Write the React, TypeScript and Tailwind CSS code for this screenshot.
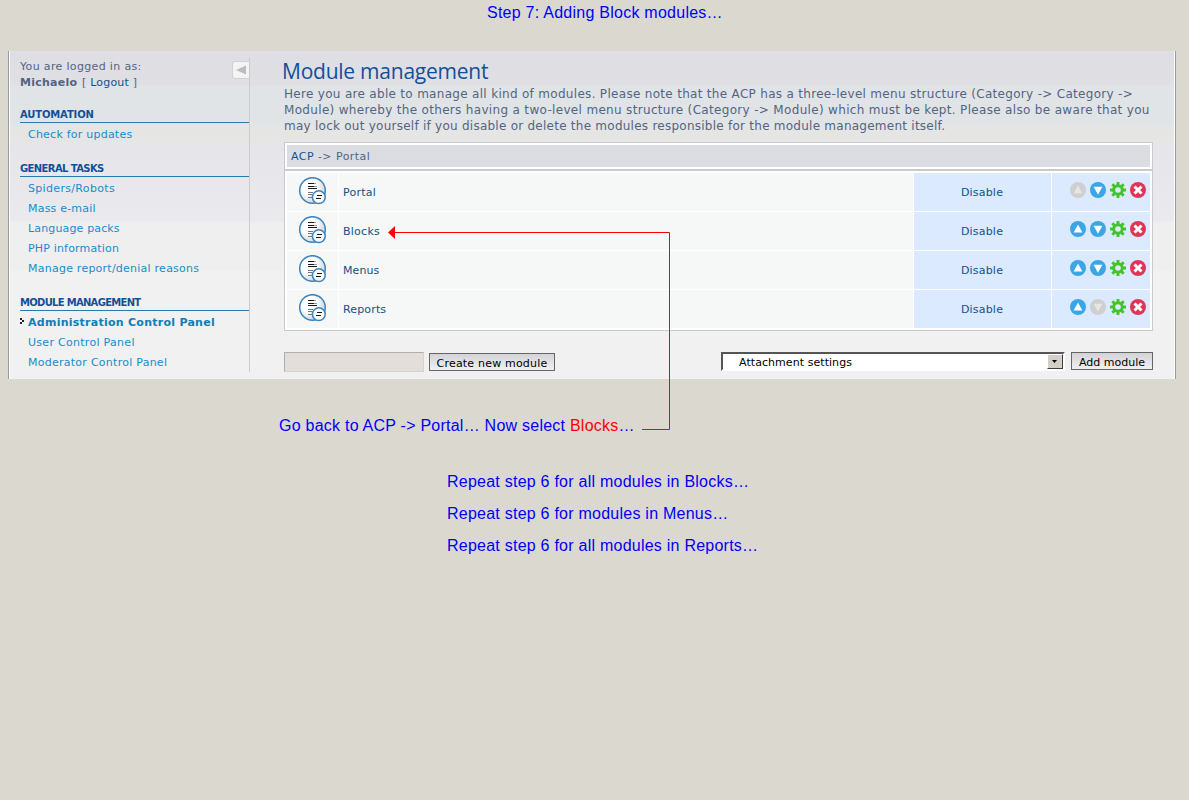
import type { ReactNode } from "react";

function ModuleIcon() {
  return (
    <svg width="28" height="28" viewBox="0 0 28 28" className="block">
      <defs>
        <radialGradient id="mod" cx="35%" cy="35%" r="75%">
          <stop offset="0.4" stopColor="#fff" />
          <stop offset="1" stopColor="#c9ccd2" />
        </radialGradient>
      </defs>
      <circle cx="13.5" cy="13.5" r="12.8" fill="url(#mod)" stroke="#3c83bf" strokeWidth="1.5" />
      <path d="M9 6.5h6M9 9.5h6M9 11.5h9" stroke="#1a1a1a" strokeWidth="1.1" />
      <path d="M15 6.5h2M15 9.5h3" stroke="#999" strokeWidth="1" />
      <path d="M9 15.5h5M9 17.5h4M9 20.5h4" stroke="#777" strokeWidth="1" />
      <circle cx="19.8" cy="20.2" r="6.4" fill="#f8fafc" stroke="#3c83bf" strokeWidth="1.5" />
      <path d="M18 18.5h5M17 21.5h5" stroke="#1a1a1a" strokeWidth="1.2" />
    </svg>
  );
}

function Move({ up, off }: { up?: boolean; off?: boolean }) {
  return (
    <svg width="16" height="16" viewBox="0 0 16 16" className="block">
      <circle cx="8" cy="8" r="8" fill={off ? "#cfcfcf" : "#3aa6e6"} />
      <path d={up ? "M8 3.5L12.4 11.4H3.6z" : "M8 12.7L12.4 4.8H3.6z"} fill={off ? "#e6e6e6" : "#fff"} />
    </svg>
  );
}

function Gear() {
  return (
    <svg width="16" height="16" viewBox="0 0 16 16" className="block">
      <g stroke="#44c32a" fill="none">
        <path d="M8 0V4M8 12V16M0 8H4M12 8H16M2.3 2.3L5 5M11 11L13.7 13.7M13.7 2.3L11 5M5 11L2.3 13.7" strokeWidth="2.9" />
        <circle cx="8" cy="8" r="4.3" strokeWidth="3" />
      </g>
    </svg>
  );
}

function Delete() {
  return (
    <svg width="16" height="16" viewBox="0 0 16 16" className="block">
      <circle cx="8" cy="8" r="8" fill="#e23457" />
      <path d="M4.5 4.5L11.5 11.5M11.5 4.5L4.5 11.5" stroke="#fff" strokeWidth="3" />
    </svg>
  );
}

function Heading({ children, className }: { children: ReactNode; className: string }) {
  return (
    <h2 className={`mt-4 mb-px h-[17px] border-b border-[#2a79b0] text-[10px] leading-[18px] font-bold whitespace-nowrap text-[#115098] ${className}`}>
      {children}
    </h2>
  );
}

function Item({ children, className }: { children: ReactNode; className: string }) {
  return <li className={`h-5 pl-2 leading-[22px] whitespace-nowrap text-[#178ccb] ${className}`}>{children}</li>;
}

const rows = [
  { name: "Portal", first: true, tracking: "tracking-[0.25px]" },
  { name: "Blocks", tracking: "tracking-[0.25px]" },
  { name: "Menus", tracking: "tracking-[0.1px]" },
  { name: "Reports", last: true, tracking: "tracking-[0.15px]" },
];

export default function App() {
  return (
    <div className="relative h-[800px] w-[1189px] overflow-hidden bg-[#dbd8d0] font-['DejaVu_Sans',Verdana,sans-serif] text-[11px] text-[#536482]">
      <p className="h-[51px] pt-[3px] pl-[487px] font-['Liberation_Sans',Arial,sans-serif] text-[16px] leading-5 tracking-[0.25px] whitespace-nowrap text-[#0000fa]">
        Step 7: Adding Block modules…
      </p>

      <div className="ml-2 flex h-[328px] w-[1168px] border-x border-[#999]">
        <div className="flex w-full border-x border-white bg-[linear-gradient(#dedee4_0px,#dfdfe4_33px,#e0e4e6_35px,#e1e4e6_72px,#e5e5e4_75px,#e5e5e4_89px,#e6e6ea_92px,#e8e8ec_131px,#e9e9ee_169px,#efefef_172px,#efefef_218px,#f1f1f1_220px)] pt-[7px]">
          <aside className="ml-[10px] h-[314px] w-[230px] shrink-0 border-r border-[#cbccd0]">
            <div className="flex h-8 justify-between">
              <div className="pt-px leading-4 whitespace-nowrap">
                <p className="tracking-[0.34px]">You are logged in as:</p>
                <p>
                  <b className="tracking-[0.25px]">Michaelo</b>
                  <span className="ml-px tracking-[0.2px]"> [ <span className="text-[#105289]">Logout</span> ]</span>
                </p>
              </div>
              <div className="mt-[3px] grid h-[18px] w-[17px] place-items-center rounded-l-[3px] border border-r-0 border-[#d2d2d6] bg-[#f4f4f5]">
                <svg width="10" height="10" viewBox="0 0 10 10"><path d="M0 5L10 0.5V9.5z" fill="#bcbcbf" /></svg>
              </div>
            </div>
            <Heading className="tracking-[-0.15px]">AUTOMATION</Heading>
            <ul>
              <Item className="tracking-[0.23px]">Check for updates</Item>
            </ul>
            <Heading className="tracking-[-0.6px]">GENERAL TASKS</Heading>
            <ul>
              <Item className="tracking-[0.33px]">Spiders/Robots</Item>
              <Item className="tracking-[0.2px]">Mass e-mail</Item>
              <Item className="tracking-[0.15px]">Language packs</Item>
              <Item className="tracking-[0.17px]">PHP information</Item>
              <Item className="tracking-[0.24px]">Manage report/denial reasons</Item>
            </ul>
            <Heading className="tracking-[-0.7px]">MODULE MANAGEMENT</Heading>
            <ul>
              <li className="flex h-5 leading-[22px] font-bold tracking-[0.26px] whitespace-nowrap text-[#0d7fb8]">
                <svg width="8" height="8" viewBox="0 0 8 8" className="mt-[5px] shrink-0"><path d="M0 1h2v2H0zM2 3h2v2H2zM0 5h2v2H0z" fill="#222" /></svg>
                Administration Control Panel
              </li>
              <Item className="tracking-[0.29px]">User Control Panel</Item>
              <Item className="tracking-[0.26px]">Moderator Control Panel</Item>
            </ul>
          </aside>

          <main className="ml-[34px] w-[869px]">
            <h1 className="-ml-[2px] h-[27px] font-['Open_Sans',sans-serif] text-[21px] leading-[27px] tracking-[-0.24px] whitespace-nowrap text-[#115098]">Module management</h1>
            <p className="h-[57px] pt-px text-[12px] leading-4 whitespace-nowrap">
              <span className="tracking-[0.305px]">Here you are able to manage all kind of modules. Please note that the ACP has a three-level menu structure (Category -&gt; Category -&gt;</span><br />
              <span className="tracking-[0.325px]">Module) whereby the others having a two-level menu structure (Category -&gt; Module) which must be kept. Please also be aware that you</span><br />
              <span className="tracking-[0.25px]">may lock out yourself if you disable or delete the modules responsible for the module management itself.</span>
            </p>
            <div className="h-7 border border-[#cacace] bg-white p-[2px]">
              <div className="h-[22px] bg-[#dcdde2] pl-1 leading-6 tracking-[0.45px]"><span className="text-[#105289]">ACP</span> -&gt; Portal</div>
            </div>
            <div className="flex h-[161px] flex-col gap-px border border-[#cacace] bg-white p-[2px]">
              {rows.map((r) => (
                <div key={r.name} className="grid h-[38px] grid-cols-[51px_574px_137px_98px] gap-px leading-10 text-[#105289]">
                  <div className="h-[38px] bg-[#f5f8f7] pt-1 pl-3"><ModuleIcon /></div>
                  <div className={`h-[38px] bg-[#f5f8f7] pl-1 ${r.tracking}`}>{r.name}</div>
                  <div className="h-[38px] bg-[#dbeaff] pr-px text-center tracking-[0.2px]">Disable</div>
                  <div className="flex h-[38px] gap-1 bg-[#dbeaff] pt-[9px] pl-[18px]">
                    <Move up off={r.first} />
                    <Move off={r.last} />
                    <Gear />
                    <Delete />
                  </div>
                </div>
              ))}
            </div>
            <div className="mt-[21px] flex items-start text-black">
              <div className="h-5 w-[140px] border border-[#d5d3cc] border-t-[#b0afac] border-l-[#b0afac] bg-[#e3deda]" />
              <button className="mt-px ml-[5px] h-[18px] w-[126px] border border-[#666] bg-linear-to-b from-[#d4d4d8] to-[#f0f0f1] pt-[2px] text-[11px] leading-[15px] tracking-[0.2px] whitespace-nowrap">Create new module</button>
              <div className="ml-[166px] flex h-[19px] w-[344px] border-2 border-t-[#555] border-r-white border-b-white border-l-[#555] bg-white">
                <span className="grow pl-4 leading-[18px] tracking-[0.06px]">Attachment settings</span>
                <span className="grid h-[15px] w-4 place-items-center border border-t-white border-r-[#404040] border-b-[#404040] border-l-white bg-[#d4d0c8]">
                  <svg width="6" height="4" viewBox="0 0 6 4"><path d="M0 0h5L2.5 3z" /></svg>
                </span>
              </div>
              <button className="ml-[6px] h-[18px] w-[82px] border border-[#666] bg-linear-to-b from-[#d4d4d8] to-[#f0f0f1] pt-[2px] text-[11px] leading-4 whitespace-nowrap">Add module</button>
            </div>
          </main>
        </div>
      </div>

      <div className="font-['Liberation_Sans',Arial,sans-serif] text-[16px] whitespace-nowrap text-[#0000fa]">
        <p className="mt-[37px] ml-[279px] leading-5 tracking-[0.24px]">
          Go back to ACP -&gt; Portal… Now select <span className="text-[#f00]">Blocks</span>…
        </p>
        <div className="mt-[30px] ml-[447px] leading-8 tracking-[0.24px]">
          <p>Repeat step 6 for all modules in Blocks…</p>
          <p>Repeat step 6 for modules in Menus…</p>
          <p>Repeat step 6 for all modules in Reports…</p>
        </div>
      </div>

      <svg className="absolute top-[225px] left-[387px]" width="284" height="206" viewBox="0 0 284 206">
        <path d="M7 7.5H282.5V204.5H255" fill="none" stroke="#f00" />
        <path d="M1 7.5L8 1V14z" fill="#f00" />
      </svg>
    </div>
  );
}
